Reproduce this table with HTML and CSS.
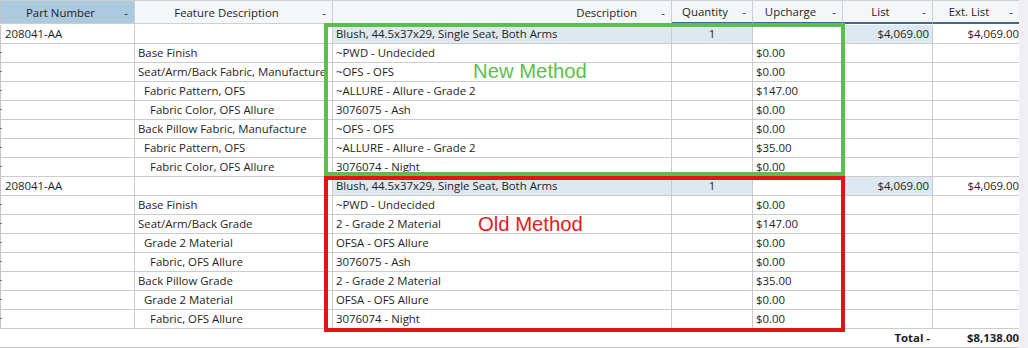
FILE: index.html
```html
<!DOCTYPE html>
<html>
<head>
<meta charset="utf-8">
<link rel="stylesheet" href="styles.css">
</head>
<body>
<div class="view">
  <div class="grid">
    <div class="hdr">
      <div class="hc sorted"><span class="lab">Part Number</span><span class="dash">-</span></div>
      <div class="hc"><span class="lab">Feature Description</span><span class="dash">-</span></div>
      <div class="hc"><span class="lab r">Description</span><span class="dash">-</span></div>
      <div class="hc dk"><span class="lab">Quantity</span><span class="dash">-</span></div>
      <div class="hc dk"><span class="lab">Upcharge</span><span class="dash">-</span></div>
      <div class="hc dk"><span class="lab">List</span><span class="dash">-</span></div>
      <div class="hc dk last"><span class="lab">Ext. List</span><span class="dash">-</span></div>
    </div>

    <div class="row">
      <div class="c c1">208041-AA</div><div class="c"></div><div class="c hl">Blush, 44.5x37x29, Single Seat, Both Arms</div><div class="c c4 hl">1</div><div class="c"></div><div class="c c6 hl">$4,069.00</div><div class="c c7">$4,069.00</div>
    </div>
    <div class="row">
      <div class="c c1 tick"></div><div class="c">Base Finish</div><div class="c">~PWD - Undecided</div><div class="c"></div><div class="c">$0.00</div><div class="c"></div><div class="c c7"></div>
    </div>
    <div class="row">
      <div class="c c1 tick"></div><div class="c">Seat/Arm/Back Fabric, Manufacture</div><div class="c">~OFS - OFS</div><div class="c"></div><div class="c">$0.00</div><div class="c"></div><div class="c c7"></div>
    </div>
    <div class="row">
      <div class="c c1 tick"></div><div class="c l1">Fabric Pattern, OFS</div><div class="c">~ALLURE - Allure - Grade 2</div><div class="c"></div><div class="c">$147.00</div><div class="c"></div><div class="c c7"></div>
    </div>
    <div class="row">
      <div class="c c1 tick"></div><div class="c l2">Fabric Color, OFS Allure</div><div class="c">3076075 - Ash</div><div class="c"></div><div class="c">$0.00</div><div class="c"></div><div class="c c7"></div>
    </div>
    <div class="row">
      <div class="c c1 tick"></div><div class="c">Back Pillow Fabric, Manufacture</div><div class="c">~OFS - OFS</div><div class="c"></div><div class="c">$0.00</div><div class="c"></div><div class="c c7"></div>
    </div>
    <div class="row">
      <div class="c c1 tick"></div><div class="c l1">Fabric Pattern, OFS</div><div class="c">~ALLURE - Allure - Grade 2</div><div class="c"></div><div class="c">$35.00</div><div class="c"></div><div class="c c7"></div>
    </div>
    <div class="row">
      <div class="c c1 tick"></div><div class="c l2">Fabric Color, OFS Allure</div><div class="c">3076074 - Night</div><div class="c"></div><div class="c">$0.00</div><div class="c"></div><div class="c c7"></div>
    </div>

    <div class="row">
      <div class="c c1">208041-AA</div><div class="c"></div><div class="c hl">Blush, 44.5x37x29, Single Seat, Both Arms</div><div class="c c4 hl">1</div><div class="c"></div><div class="c c6 hl">$4,069.00</div><div class="c c7">$4,069.00</div>
    </div>
    <div class="row">
      <div class="c c1 tick"></div><div class="c">Base Finish</div><div class="c">~PWD - Undecided</div><div class="c"></div><div class="c">$0.00</div><div class="c"></div><div class="c c7"></div>
    </div>
    <div class="row">
      <div class="c c1 tick"></div><div class="c">Seat/Arm/Back Grade</div><div class="c">2 - Grade 2 Material</div><div class="c"></div><div class="c">$147.00</div><div class="c"></div><div class="c c7"></div>
    </div>
    <div class="row">
      <div class="c c1 tick"></div><div class="c l1">Grade 2 Material</div><div class="c">OFSA - OFS Allure</div><div class="c"></div><div class="c">$0.00</div><div class="c"></div><div class="c c7"></div>
    </div>
    <div class="row">
      <div class="c c1 tick"></div><div class="c l2">Fabric, OFS Allure</div><div class="c">3076075 - Ash</div><div class="c"></div><div class="c">$0.00</div><div class="c"></div><div class="c c7"></div>
    </div>
    <div class="row">
      <div class="c c1 tick"></div><div class="c">Back Pillow Grade</div><div class="c">2 - Grade 2 Material</div><div class="c"></div><div class="c">$35.00</div><div class="c"></div><div class="c c7"></div>
    </div>
    <div class="row">
      <div class="c c1 tick"></div><div class="c l1">Grade 2 Material</div><div class="c">OFSA - OFS Allure</div><div class="c"></div><div class="c">$0.00</div><div class="c"></div><div class="c c7"></div>
    </div>
    <div class="row">
      <div class="c c1 tick"></div><div class="c l2">Fabric, OFS Allure</div><div class="c">3076074 - Night</div><div class="c"></div><div class="c">$0.00</div><div class="c"></div><div class="c c7"></div>
    </div>

    <div class="foot">
      <div></div><div></div><div></div><div></div><div></div>
      <div class="ft c6">Total -</div>
      <div class="ft c7">$8,138.00</div>
    </div>
  </div>
  <div class="scroll"></div>

  <div class="mark mark-new"></div>
  <div class="mark mark-old"></div>
  <div class="lbl lbl-new">New Method</div>
  <div class="lbl lbl-old">Old Method</div>
</div>
</body>
</html>
```

FILE: styles.css
```css
* {
  box-sizing: border-box;
  margin: 0;
  padding: 0;
}

html, body {
  width: 1028px;
  height: 348px;
  overflow: hidden;
  background: #ffffff;
}

body {
  font-family: "Open Sans", "Noto Sans", sans-serif;
  font-size: 11.4px;
  color: #1e1e24;
}

.view {
  position: relative;
  display: flex;
  height: 348px;
}

.grid {
  width: 1019px;
  display: flex;
  flex-direction: column;
}

.hdr,
.row,
.foot {
  display: grid;
  grid-template-columns: 135px 198px 339px 81px 90px 90px 86px;
}

.hdr {
  height: 25px;
  padding-bottom: 1px;
}

.hc {
  display: flex;
  align-items: center;
  background: #f4f7fa;
  border-top: 1px solid #cfcfcf;
  border-right: 1px solid #cfcfcf;
  border-bottom: 1px solid #cfcfcf;
  white-space: nowrap;
  overflow: hidden;
}

.hc.sorted {
  background: #abc9df;
  border-left: 1px solid #c4c4c4;
}

.hc.dk {
  border-bottom: 2px solid #3a6a8d;
}

.hc.last {
  border-right: none;
}

.hc .lab {
  flex: 1;
  text-align: center;
}

.hc .lab.r {
  text-align: right;
  padding-right: 20px;
}

.hc .dash {
  width: 14px;
  padding-right: 6px;
  text-align: right;
}

.row {
  height: 19px;
}

.c {
  height: 19px;
  line-height: 18px;
  padding: 0 3px;
  border-right: 1px solid #cbcbcb;
  border-bottom: 1px solid #cbcbcb;
  white-space: nowrap;
  overflow: hidden;
}

.c1 {
  border-left: 1px solid #c4c4c4;
  padding-left: 4px;
}

.tick {
  position: relative;
  overflow: visible;
}

.tick::before {
  content: "";
  position: absolute;
  left: -1px;
  top: 8px;
  width: 2px;
  height: 1px;
  background: #777777;
}

.c4 {
  text-align: center;
}

.c6 {
  text-align: right;
  padding-right: 3px;
}

.c7 {
  text-align: right;
  padding-right: 0;
  border-right: none;
}

.l1 {
  padding-left: 9px;
}

.l2 {
  padding-left: 15px;
}

.hl {
  background: #dde8f0;
}

.foot {
  height: 19px;
  border-bottom: 1px solid #cbcbcb;
}

.ft {
  font-weight: 700;
  line-height: 18px;
  white-space: nowrap;
}

.scroll {
  width: 9px;
  height: 348px;
  background: #f0f0f4;
}

.mark {
  position: absolute;
  border: 4px solid;
}

.mark-new {
  left: 324px;
  top: 23px;
  width: 521px;
  height: 153px;
  border-color: #5cbf4b;
}

.mark-old {
  left: 324px;
  top: 176px;
  width: 521px;
  height: 156px;
  border-color: #e31414;
}

.lbl {
  position: absolute;
  font-family: "Liberation Sans", Arial, sans-serif;
  font-size: 20.3px;
  line-height: 1;
  white-space: nowrap;
}

.lbl-new {
  left: 473px;
  top: 61px;
  color: #5cbf4b;
}

.lbl-old {
  left: 478px;
  top: 214px;
  color: #e42020;
}
```
